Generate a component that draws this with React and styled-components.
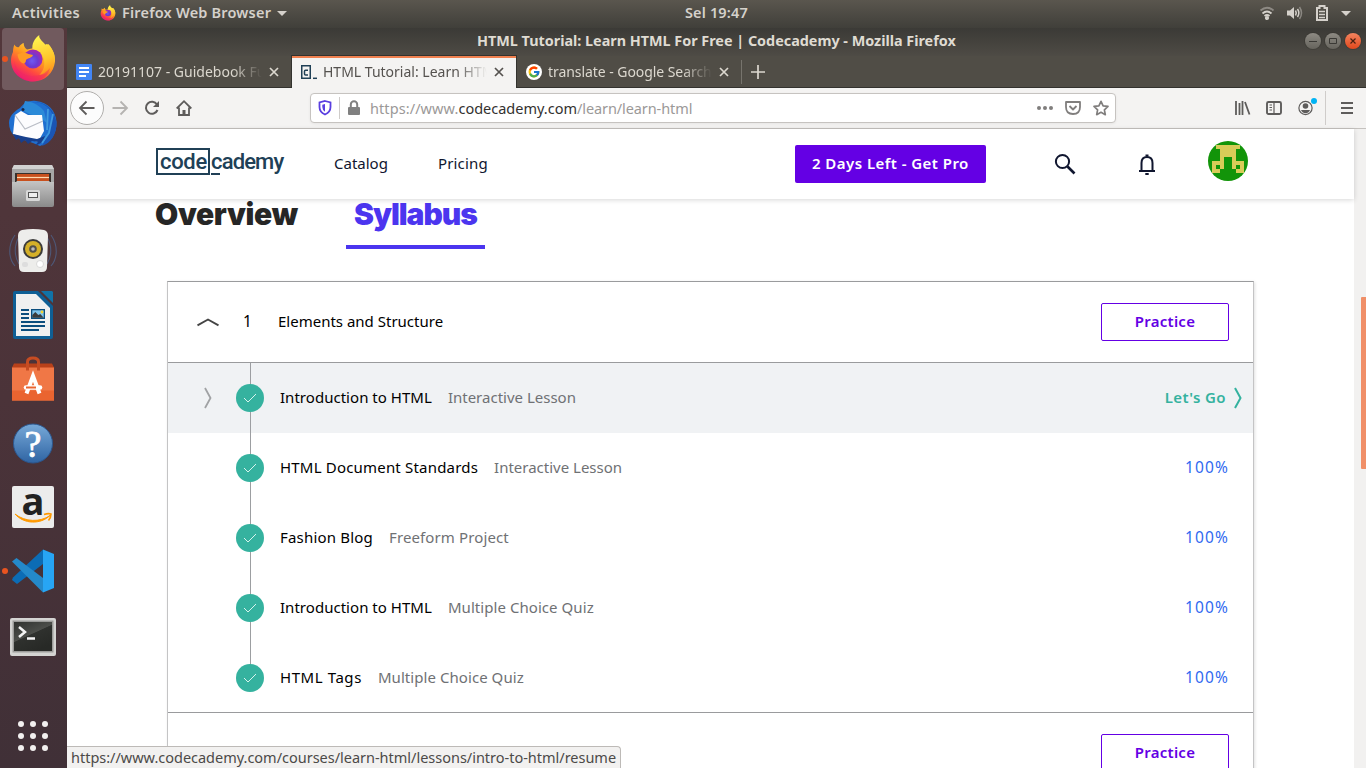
import React from 'react';
import styled, { createGlobalStyle, css } from 'styled-components';
import { FcGoogle } from 'react-icons/fc';

const UI = '"Noto Sans", "Open Sans", sans-serif';
const PAGE = '"Noto Sans", "Open Sans", sans-serif';

const GlobalStyle = createGlobalStyle`
  * { box-sizing: border-box; }
  body { margin: 0; overflow: hidden; background: #fff; }
  svg { display: block; flex: none; overflow: visible; }
`;

const Desktop = styled.div`
  width: 1366px;
  height: 768px;
  display: flex;
  flex-direction: column;
  overflow: hidden;
  font-family: ${UI};
`;

const Label = styled.span`
  display: inline-block;
  padding-bottom: 2px;
  white-space: pre;
  font-size: ${(p) => p.$size || 15}px;
  font-weight: ${(p) => p.$weight || 400};
  letter-spacing: ${(p) => p.$track || 0}px;
  color: ${(p) => p.$color || 'inherit'};
`;

/* ---------- system bar ---------- */
const SystemBar = styled.header`
  height: 28px;
  flex: none;
  display: flex;
  align-items: center;
  padding: 0 15px 2px 12px;
  color: #d5d1cb;
  background: linear-gradient(#5a564e, #403f3a);
`;
const AppMenu = styled.div`
  display: flex;
  align-items: center;
  gap: 6px;
  width: 164px;
  margin-left: 20px;
`;
const Clock = styled.div`margin-left: 421px; padding-bottom: 1px;`;
const Indicators = styled.div`
  margin-left: auto;
  display: flex;
  align-items: center;
  gap: 13px;
`;

/* ---------- dock ---------- */
const Workspace = styled.div`flex: 1; display: flex; min-height: 0;`;
const Dock = styled.nav`
  width: 67px;
  flex: none;
  display: flex;
  flex-direction: column;
  gap: 2px;
  padding: 0 3px 17px 2px;
  background: linear-gradient(#53373b, #4b3339 50%, #403037);
`;
const DockItem = styled.div`
  position: relative;
  width: 62px;
  height: 62px;
  display: flex;
  align-items: center;
  justify-content: center;
  border-radius: 4px;
  background: ${(p) => (p.$focused ? '#715a5e' : 'transparent')};
  ${(p) => p.$running && css`
    &::before {
      content: '';
      position: absolute;
      left: 0;
      top: 28px;
      width: 6px;
      height: 6px;
      border-radius: 50%;
      background: #e95420;
    }
  `}
`;
const AppGrid = styled.div`
  margin: auto 0 0 16px;
  display: grid;
  grid-template-columns: repeat(3, 6px);
  gap: 6px;
`;
const GridDot = styled.i`height: 6px; border-radius: 50%; background: #f2f0ef;`;

/* ---------- browser ---------- */
const Browser = styled.main`flex: 1; min-width: 0; display: flex; flex-direction: column;`;
const TitleBar = styled.div`
  height: 28px;
  flex: none;
  display: flex;
  align-items: center;
  padding: 0 5px 2px 410px;
  color: #dfdbd2;
  background: linear-gradient(#3b3a36, #4e4b45);
`;
const WindowButtons = styled.div`margin-left: auto; display: flex; gap: 4px;`;
const WindowButton = styled.span`
  width: 16px;
  height: 16px;
  display: flex;
  align-items: center;
  justify-content: center;
  border-radius: 50%;
  background: ${(p) => (p.$close ? 'linear-gradient(#f3845f, #e2481c)' : 'linear-gradient(#8d8a83, #66645d)')};
  box-shadow: 0 0 0 1px rgba(50, 48, 43, 0.35);
`;
const TabStrip = styled.div`
  height: 32px;
  flex: none;
  display: flex;
  background: linear-gradient(transparent 31px, #33322e 31px), #504d46;
`;
const Tab = styled.div`
  width: 225px;
  padding: 0 13px 0 9px;
  display: flex;
  align-items: center;
  justify-content: space-between;
  color: #dcd8cf;
  ${(p) => p.$active && css`
    width: 226px;
    margin: 0 0 0 -1px;
    color: #55524f;
    background: #f4f3f2;
    border: solid #33322e;
    border-width: 0 1px;
    padding: 0 12px 0 9px;
    box-shadow: inset 0 2px #f0804f, 0 -1px #33322e;
  `}
`;
const TabTitle = styled.div`
  width: 164px;
  margin-right: 7px;
  margin-left: 6px;
  padding-bottom: 1px;
  overflow: hidden;
  mask-image: linear-gradient(90deg, #000 134px, transparent 164px);
`;
const NewTab = styled.div`
  margin: 4px 0 4px -1px;
  padding-left: 9px;
  display: flex;
  align-items: center;
  border-left: 1px solid #77746d;
`;
const Toolbar = styled.div`
  height: 41px;
  flex: none;
  display: flex;
  align-items: center;
  padding: 0 12px 0 3px;
  border-bottom: 1px solid #c5c2bf;
  background: #f4f3f2;
  color: #5e5c5b;
`;
const BackButton = styled.div`
  width: 34px;
  height: 34px;
  display: flex;
  align-items: center;
  justify-content: center;
  border: 1px solid #b0aeac;
  border-radius: 50%;
  background: #fcfcfc;
`;
const NavIcons = styled.div`display: flex; gap: 16px; margin-left: 8px;`;
const AddressBar = styled.div`
  width: 806px;
  height: 30px;
  margin-left: 118px;
  display: flex;
  align-items: center;
  padding: 0 6px;
  border: 1px solid #c6c3c0;
  border-radius: 4px;
  background: #fff;
  box-shadow: 0 1px 3px rgba(0, 0, 0, 0.06);
`;
const Divider = styled.i`
  width: 1px;
  height: ${(p) => p.$h}px;
  margin: ${(p) => p.$m};
  background: #cfccca;
`;
const Url = styled.div`flex: 1; padding-top: 1px; margin-left: 8px; color: #9b9998;`;
const PageActions = styled.div`display: flex; gap: 12px; color: #807e7d;`;
const ToolIcons = styled.div`margin-left: 118px; display: flex; gap: 16px;`;
const AccountIcon = styled.div`
  position: relative;
  &::after {
    content: '';
    position: absolute;
    top: -2px;
    right: -3px;
    width: 6px;
    height: 6px;
    border-radius: 50%;
    background: #00b3f4;
  }
`;

/* ---------- page ---------- */
const Viewport = styled.div`flex: 1; display: flex; min-height: 0; position: relative;`;
const Page = styled.div`flex: 1; min-width: 0; background: #fff; font-family: ${PAGE};`;
const Scrollbar = styled.div`width: 12px; background: #f2f1f0; padding: 168px 0 0 7px;`;
const Thumb = styled.div`height: 172px; background: #f08f68; border-radius: 1px 0 0 1px;`;
const SiteHeader = styled.div`
  position: relative;
  height: 70px;
  display: flex;
  align-items: center;
  padding: 0 106px 0 89px;
  background: #fff;
  color: #10162f;
  box-shadow: 0 1px 5px rgba(0, 0, 0, 0.16);
`;
const Logo = styled.div`
  display: flex;
  width: 128px;
  height: 28px;
  margin-top: -4px;
  font: 500 22px/23px Roboto, "Open Sans", sans-serif;
  color: #204056;
`;
const LogoBox = styled.span`
  flex: none;
  width: 54px;
  height: 27px;
  padding-left: 2px;
  border: 2px solid #204056;
  letter-spacing: -0.3px;
`;
const LogoRest = styled.span`
  flex: none;
  margin-left: 1px;
  height: 27px;
  padding-top: 2px;
  letter-spacing: -0.85px;
  background: linear-gradient(#204056, #204056) 0 100% / 9px 2px no-repeat;
`;
const SiteNav = styled.div`display: flex; gap: 50px; margin-left: 50px;`;
const ProButton = styled.div`
  width: 191px;
  height: 38px;
  margin-left: 307px;
  display: flex;
  align-items: center;
  justify-content: center;
  border-radius: 2px;
  background: #6400e4;
  color: #fff;
`;
const HeaderIcons = styled.div`
  flex: 1;
  display: flex;
  align-items: center;
  margin-left: 67px;
`;
const BellSlot = styled.div`margin: 0 49px 0 58px;`;
const Tabs = styled.div`
  display: flex;
  height: 50px;
  padding-left: 88px;
  font: 900 30px/30px Inter, "Open Sans", sans-serif;
`;
const PageTab = styled.div`
  width: ${(p) => p.$w}px;
  margin-right: 48px;
  white-space: nowrap;
  letter-spacing: ${(p) => p.$track}px;
  ${(p) => p.$active
    ? css`color: #4b35ef; border-bottom: 4px solid #4b35ef; padding-left: 8px;`
    : css`color: #262626;`}
`;
const Card = styled.section`
  width: 1087px;
  height: 520px;
  margin: 32px 0 0 100px;
  border: 1px solid #9a9b9d;
  border-left-color: #c4c4c5;
  border-right-color: #c4c4c5;
  box-shadow: 1px 1px 3px rgba(0, 0, 0, 0.12);
`;
const ModuleHead = styled.div`
  height: 81px;
  display: flex;
  align-items: center;
  padding: 0 24px 1px 29px;
  border-bottom: ${(p) => (p.$last ? 0 : 1)}px solid #9a9b9d;
  color: #000;
`;
const ModuleNumber = styled.span`width: 35px; margin-left: 24px; padding-bottom: 1px; font-size: 15.5px;`;
const PracticeButton = styled.div`
  width: 128px;
  height: 38px;
  margin-left: auto;
  display: flex;
  align-items: center;
  justify-content: center;
  border: 1px solid #6400e4;
  border-radius: 2px;
  color: #6400e4;
`;
const Lessons = styled.div`height: 350px; border-bottom: 1px solid #9a9b9d;`;
const Lesson = styled.div`
  height: 70px;
  display: flex;
  align-items: center;
  padding-right: ${(p) => (p.$current ? 10 : 24)}px;
  background: ${(p) => (p.$current ? '#f0f2f4' : 'transparent')};
`;
const Expander = styled.div`width: 68px; padding-left: 36px;`;
const Rail = styled.div`
  width: 28px;
  height: 100%;
  display: flex;
  align-items: center;
  background: linear-gradient(#9c9ea1, #9c9ea1) 14px 0 / 1px ${(p) => (p.$end ? 35 : 70)}px no-repeat;
`;
const Check = styled.span`
  width: 28px;
  height: 28px;
  display: flex;
  align-items: center;
  justify-content: center;
  border-radius: 50%;
  background: #35b29f;
`;
const LessonText = styled.div`display: flex; gap: 16px; margin-left: 16px; flex: 1;`;
const Status = styled.div`display: flex; align-items: center; gap: 8px;`;
const StatusBar = styled.div`
  position: absolute;
  left: 0;
  bottom: 0;
  width: 554px;
  height: 22px;
  padding: 0 0 0 4px;
  line-height: 20px;
  border: solid #bdbab7;
  border-width: 1px 1px 0 0;
  border-radius: 0 4px 0 0;
  background: #f2f1f0;
  color: #4c4a48;
`;

/* ---------- icons ---------- */
const Firefox = ({ size = 48, id }) => (
  <svg width={size} height={size} viewBox="0 0 48 48">
    <defs>
      <linearGradient id={id + 'b'} x1=".8" y1=".1" x2=".25" y2=".95">
        <stop offset="0" stopColor="#ffe63c" /><stop offset=".4" stopColor="#ff9a1f" />
        <stop offset=".7" stopColor="#ff4a40" /><stop offset="1" stopColor="#e8127c" />
      </linearGradient>
      <linearGradient id={id + 'y'} x1=".5" y1="0" x2=".7" y2="1">
        <stop offset="0" stopColor="#fff44f" /><stop offset=".6" stopColor="#ffc52b" /><stop offset="1" stopColor="#ff8a1c" />
      </linearGradient>
      <radialGradient id={id + 'p'} cx=".45" cy=".6">
        <stop offset="0" stopColor="#7059f0" /><stop offset=".6" stopColor="#6b3bd2" /><stop offset="1" stopColor="#9b2bb5" />
      </radialGradient>
    </defs>
    <path d="M5.500 9.500C6.500 12 8.500 12.500 10 12c1-2 3-3.500 4.700-4 0 3 1 5 3.300 6.500L30 12l8-3c5 4 8.500 10 8 17-1 12-10 20.500-22 20.500S2 37.500 2 25.500c0-3 .8-6 2-8.500 0-3 .5-5.500 1.500-7.500Z" fill={`url(#${id}b)`} />
    <path d="M30.300 0c-1 4 5 7.500 7 11l2-2c4.500 4.500 7.500 12 6 19-2 7-8 12-15 12 4-4 6-9 4.500-16-1-5-5.500-8-11-8.500C22 9 26 3 30.300 0Z" fill={`url(#${id}y)`} />
    <circle cx="24" cy="24" r="9.600" fill={`url(#${id}p)`} />
    <path d="M8.500 19.500c4-2.500 8-2 11-.5l4.500 1c-1 3-5 3-7 5 0 3-2 4-4 3-3-2-4-5-4.500-8.500Z" fill="#ff9a24" />
    <path d="M5 26c2 9 8 15 18 15 8 0 14-3 18-8-2 8-9 13.500-17 13.500C14 46.500 6 39 5 26Z" fill="#f2295f" opacity=".5" />
  </svg>
);
const Thunderbird = () => (
  <svg width="48" height="48" viewBox="0 -1 48 48">
    <path d="M11 8C15 3 20 0 27 1c12 1 20 10 20.500 21C48 34 41 43 31 46l-7-3L6 37C2 33 0 28 0 23 0 17 4 12 11 8Z" fill="#1f6fd0" />
    <path d="M24 2c10 0 18 6 20 14l-4 16-7 14c9-3 15-12 14.500-24C46 11 37 1 24 2Z" fill="#1a55b4" />
    <path d="M16 1c9 1 15 5 19 10l3 12-8-6-10-3-7-4Z" fill="#2b8ad8" />
    <path d="M6 15 12 11l7 4 14 0 2 16-6 11L4 34Z" fill="#fcfcfe" />
    <path d="m6 15 10 14 18-8" fill="none" stroke="#b9bdc6" strokeWidth="1.200" />
    <path d="m4 34 3 6 3-2 2 5 4-3 3 4 4-3 6 1-3 4 8-4 2-6-8 3-11-2Z" fill="#173f8d" />
    <path d="M44 14 40 33 33 43M39 9l-1 21" stroke="#3f99de" strokeWidth="1.800" fill="none" />
    <circle cx="14" cy="9.500" r="1.500" fill="#182848" />
  </svg>
);
const Files = () => (
  <svg width="48" height="48" viewBox="0 -1 48 48">
    <defs><linearGradient id="fl" x2="0" y2="1"><stop stopColor="#c5c5c5" /><stop offset="1" stopColor="#8a8a8a" /></linearGradient></defs>
    <path d="M5 1h38l2 4v17H3V5Z" fill="#a6a6a6" /><path d="M5 1h38l2 4H3Z" fill="#d2d2d2" />
    <rect x="6" y="9" width="36" height="12" fill="#38302c" />
    <path d="M8 10h32v10H8Z" fill="#c8501e" /><path d="M8 13.500h32" stroke="#ffd9b0" strokeWidth="1.200" />
    <path d="M3 18h4l1-1h32l1 1h4v23a2 2 0 0 1-2 2H5a2 2 0 0 1-2-2Z" fill="url(#fl)" />
    <rect x="17" y="26" width="14" height="11" rx="1.500" fill="#d8d8d8" /><rect x="19.500" y="28.500" width="9" height="5" fill="#eee" stroke="#555" />
  </svg>
);
const Speaker = () => (
  <svg width="48" height="48" viewBox="0 0 48 48">
    <g fill="none" stroke="#4e5878" strokeWidth="1.100"><path d="M6 8C-1 18-1 31 6 39M10 10c-5 8-5 19 0 27M42 8c7 10 7 23 0 31M38 10c5 8 5 19 0 27" /></g>
    <path d="M13 3q11-2 22 0 4 1 4 6l-1 31q0 5-5 5H15q-5 0-5-5L9 9q0-5 4-6Z" fill="#ededeb" />
    <circle cx="24" cy="22" r="10" fill="#3b3b3b" /><circle cx="24" cy="22" r="8" fill="#d4b029" />
    <circle cx="24" cy="22" r="3.800" fill="#52504a" /><circle cx="24" cy="22" r="1.800" fill="#bbb" />
    <rect x="13" y="35" width="6" height="5" rx="2" fill="#ddd" /><circle cx="31" cy="37" r="3.500" fill="#fff" stroke="#ccc" strokeWidth=".7" />
  </svg>
);
const Writer = () => (
  <svg width="48" height="48" viewBox="0 0 48 48">
    <path d="M6 0h23l15 15v31a2 2 0 0 1-2 2H6a2 2 0 0 1-2-2V2a2 2 0 0 1 2-2Z" fill="#0f5f95" />
    <path d="M32 0h11l1 1v11Z" fill="#1173a8" />
    <path d="M7 3h20l14 14v28H7Z" fill="#f0f0f0" />
    <path d="M12 19h8M12 23h8M12 27h8M12 31h24M12 35h24M12 39h18" stroke="#0b4d7d" strokeWidth="2" />
    <rect x="22" y="18" width="14" height="10" fill="#0b4d7d" /><rect x="23.300" y="19.300" width="11.400" height="7.400" fill="#7fc4ec" />
    <path d="M23.300 26.700V24l3-3 3 3 2-1 3.400 3.700Z" fill="#3c3c3c" /><circle cx="33" cy="21" r="1.400" fill="#f5d32c" />
  </svg>
);
const Software = () => (
  <svg width="48" height="48" viewBox="0 -2.500 48 48">
    <path d="M5 6h38l2 4v5H3v-5Z" fill="#b8411a" />
    <rect x="3" y="10" width="42" height="33" fill="#f07746" /><path d="M3 33h42v10H3Z" fill="#ea6430" />
    <path d="M18.500 13V4.500q0-4 5.500-4t5.500 4V13" fill="none" stroke="#c64c22" strokeWidth="3" />
    <g fill="none" stroke="#fff"><path d="m17.500 36 6.500-17.500L30.500 36" strokeWidth="4" /><path d="M17 30h14" strokeWidth="4.600" strokeLinecap="round" /></g>
    <path d="M17 30h10" stroke="#ea6430" strokeWidth="2" />
  </svg>
);
const Help = () => (
  <svg width="48" height="48" viewBox="0 0 48 48">
    <defs><linearGradient id="hp" x2="0" y2="1"><stop stopColor="#77a9d8" /><stop offset="1" stopColor="#2f64a3" /></linearGradient></defs>
    <circle cx="24" cy="24.500" r="19.500" fill="url(#hp)" stroke="#2b578f" />
    <text x="24" y="37.500" textAnchor="middle" fill="#fff" stroke="#fff" strokeWidth=".8" fontFamily="Liberation Serif, serif" fontSize="38">?</text>
  </svg>
);
const Amazon = () => (
  <svg width="48" height="48" viewBox="0 0 48 48">
    <rect x="3" y="3" width="42" height="42" rx="2" fill="#ececec" />
    <text x="24" y="31.500" textAnchor="middle" fill="#222" fontFamily="Open Sans, sans-serif" fontSize="38" fontWeight="700">a</text>
    <path d="M6 31c10 8 25 8.500 35 1.500-9 9-26 9-35-1.500Z" fill="#f90" stroke="#f90" />
    <path d="M35 31.500c3-1 5.500-1 7-.5 0 2-.7 4.500-2.500 6.500" fill="none" stroke="#f90" strokeWidth="1.600" />
  </svg>
);
const VSCode = () => (
  <svg width="48" height="48" viewBox="0 0 48 48">
    <path d="m3 33 5 4L34 17V2.500L4 30.500Z" fill="#0c6cb5" />
    <path d="m3 14.500 4.500-3.500L34 31v14.500Z" fill="#2489ca" />
    <path d="m34 2.500 11 4.500v34l-11 4.500Z" fill="#27a5f4" />
  </svg>
);
const Terminal = () => (
  <svg width="48" height="48" viewBox="0 -2 48 48">
    <defs><linearGradient id="tm" x2=".6" y2="1"><stop stopColor="#30322f" /><stop offset=".5" stopColor="#4c4e4a" /><stop offset=".52" stopColor="#2f312e" /><stop offset="1" stopColor="#272926" /></linearGradient></defs>
    <rect x="1" y="5" width="46" height="38" rx="2" fill="#d4d4d2" /><rect x="3.500" y="7.500" width="41" height="32" fill="#9b9b99" />
    <rect x="5" y="9" width="38" height="29" fill="url(#tm)" />
    <path d="m10 14 6 5-6 5M18 25.500h8" fill="none" stroke="#f3f3f3" strokeWidth="2.500" />
  </svg>
);
const Caret = ({ w = 10 }) => <svg width={w} height="5" viewBox="0 0 10 5"><path d="M0 0h10L5 5Z" fill="#d5d1cb" /></svg>;
const Line = ({ w = 16, h = w, d, sw = 2, box, ...rest }) => (
  <svg width={w} height={h} viewBox={box || `0 0 ${w} ${h}`} fill="none" stroke="currentColor" strokeWidth={sw} {...rest}><path d={d} /></svg>
);
const CloseX = () => <Line w={10} d="m1 1 8 8M9 1 1 9" sw={1.7} />;
const CodecademyMark = () => (
  <svg width="16" height="16" viewBox="0 0 16 16" fill="none" stroke="#204056">
    <rect x=".75" y="1.750" width="8.500" height="12.500" strokeWidth="1.500" /><path d="M7 6.200H4.500a1 1 0 0 0-1 1V10a1 1 0 0 0 1 1H7" strokeWidth="1.500" /><path d="M12 14.300h4" strokeWidth="1.500" />
  </svg>
);
const DocsMark = () => (
  <svg width="16" height="16" viewBox="0 0 16 16"><rect width="16" height="16" rx="1" fill="#4285f4" /><path d="M3 4h10M3 8h10M3 12h7" stroke="#fff" strokeWidth="2" /></svg>
);
const GoogleMark = () => (
  <svg width="16" height="16" viewBox="0 0 16 16"><circle cx="8" cy="8" r="8" fill="#fff" /><g transform="translate(1.500 1.500)"><FcGoogle size={13} /></g></svg>
);
/* inclusive column runs of the filled cells, one string per row */
const AVATAR = ['2-7', '3-6', '3-6', '3-3,6-6', '1-3,6-8', '1-1,3-3,6-6,8-8', '1-2,7-8'];
const Avatar = () => (
  <svg width="40" height="40" viewBox="0 0 40 40">
    <circle cx="20" cy="20" r="20" fill="#129409" />
    {AVATAR.map((row, y) => row.split(',').map((run) => {
      const [a, b] = run.split('-').map(Number);
      return <rect key={y + run} x={a * 4} y={(y + 1) * 4} width={(b - a + 1) * 4} height="4" fill="#d8cc58" shapeRendering="crispEdges" />;
    }))}
  </svg>
);
const AvatarSlot = styled.div`margin-top: -6px;`;
const CheckMark = () => <Line w={14} h={10} d="m1 5 4 4 8-8" sw={1} stroke="#d9f3ee" />;

const LESSONS = [
  { title: 'Introduction to HTML', track: 0.03, kind: 'Interactive Lesson', kindTrack: 0, current: true },
  { title: 'HTML Document Standards', track: 0.19, kind: 'Interactive Lesson', kindTrack: 0 },
  { title: 'Fashion Blog', track: 0.19, kind: 'Freeform Project', kindTrack: 0.12 },
  { title: 'Introduction to HTML', track: 0.03, kind: 'Multiple Choice Quiz', kindTrack: 0.06 },
  { title: 'HTML Tags', track: 0.57, kind: 'Multiple Choice Quiz', kindTrack: 0.06 },
];
const DOCK = [Thunderbird, Files, Speaker, Writer, Software, Help, Amazon];

export default function App() {
  return (
    <Desktop>
      <GlobalStyle />
      <SystemBar>
        <Label $weight={600} $size={14.5} $track={0.33}>Activities</Label>
        <AppMenu>
          <Firefox size={16} id="s" />
          <Label $weight={600} $size={14.5} $track={0.2}>Firefox Web Browser</Label>
          <Caret />
        </AppMenu>
        <Clock><Label $weight={600} $size={14.5} $track={0.15}>Sel 19:47</Label></Clock>
        <Indicators>
          <svg width="14" height="14" viewBox="0 0 14 14" fill="none" stroke="#d5d1cb" strokeWidth="1.800">
            <path d="M.5 4.500q6.500-5.500 13 0" opacity=".45" /><path d="M2.500 7.500q4.500-4 9 0M4.500 10q2.500-2 5 0" /><circle cx="7" cy="12" r="1.200" fill="#d5d1cb" />
          </svg>
          <svg width="16" height="14" viewBox="0 0 16 14" fill="none" stroke="#d5d1cb" strokeWidth="1.500">
            <path d="M0 4.500h3L7 1v12L3 9.500H0Z" fill="#d5d1cb" stroke="none" /><path d="M8.500 4.500q1.500 2.500 0 5M10.500 3q2.700 4 0 8" /><path d="M12.500 1q4 6 0 12" opacity=".45" />
          </svg>
          <svg width="12" height="16" viewBox="0 0 12 16" fill="none" stroke="#d5d1cb">
            <path d="M1 3h2.500V1h5v2H11v12H1Z" strokeWidth="2" /><path d="M3 6.500h6M3 9.500h6M3 12.500h6" strokeWidth="1.500" />
          </svg>
          <Caret w={10} />
        </Indicators>
      </SystemBar>
      <Workspace>
        <Dock>
          <DockItem $focused $running><Firefox id="d" /></DockItem>
          {DOCK.map((Icon, i) => <DockItem key={i}><Icon /></DockItem>)}
          <DockItem $running><VSCode /></DockItem>
          <DockItem><Terminal /></DockItem>
          <AppGrid>{Array.from({ length: 9 }, (_, i) => <GridDot key={i} />)}</AppGrid>
        </Dock>
        <Browser>
          <TitleBar>
            <Label $weight={700} $size={14.4} $track={-0.015}>HTML Tutorial: Learn HTML For Free | Codecademy - Mozilla Firefox</Label>
            <WindowButtons>
              <WindowButton><Line w={8} d="M0 4.500h8" sw={1} stroke="#3a3935" /></WindowButton>
              <WindowButton><Line w={8} d="M.5 1.500h7v5h-7Z" sw={1} stroke="#3a3935" /></WindowButton>
              <WindowButton $close><Line w={6} d="m.5.5 5 5m0-5-5 5" sw={1.2} stroke="#4a2010" /></WindowButton>
            </WindowButtons>
          </TitleBar>
          <TabStrip>
            <Tab><DocsMark /><TabTitle><Label $size={14}>20191107 - Guidebook Fu</Label></TabTitle><CloseX /></Tab>
            <Tab $active><CodecademyMark /><TabTitle><Label $size={14}>HTML Tutorial: Learn HTML</Label></TabTitle><CloseX /></Tab>
            <Tab><GoogleMark /><TabTitle><Label $size={14} $track={-0.06}>translate - Google Search</Label></TabTitle><CloseX /></Tab>
            <NewTab><Line w={14} d="M7 0v14M0 7h14" sw={1.7} stroke="#dcd8cf" /></NewTab>
          </TabStrip>
          <Toolbar>
            <BackButton><Line d="M15.500 8H1.500M7.500 1.500 1 8l6.500 6.500" sw={1.8} /></BackButton>
            <NavIcons>
              <Line d="M.5 8h14M8.500 1.500 15 8l-6.500 6.500" sw={1.8} stroke="#b5b3b1" />
              <svg width="16" height="16" viewBox="0 0 16 16" fill="none" stroke="currentColor" strokeWidth="2"><path d="M13 4.500A6 6 0 1 0 13.500 10" /><path d="M15 1v6H9Z" fill="currentColor" stroke="none" /></svg>
              <svg width="16" height="16" viewBox="0 0 16 16" fill="none" stroke="currentColor" strokeWidth="1.800"><path d="M.7 8.500 8 1.200l7.300 7.300M3 7.500V15h10V7.500" /><path d="M6.500 15v-5h3v5Z" fill="currentColor" stroke="none" /></svg>
            </NavIcons>
            <AddressBar>
              <svg width="16" height="16" viewBox="0 0 16 16"><path d="M8 1 13.500 2.500V7q0 5-5.500 7.500Q2.500 12 2.500 7V2.500Z" fill="#fff" stroke="#5a3fe0" strokeWidth="1.800" /><path d="M8 4 5.300 4.800V7q0 3 2.700 4.800Z" fill="#5a3fe0" /></svg>
              <Divider $h={22} $m="0 6px 0 6px" />
              <svg width="16" height="16" viewBox="0 0 16 16"><rect x="2" y="7" width="12" height="8" rx="1" fill="#808080" /><path d="M4.800 8V4.500a3.200 3.200 0 0 1 6.400 0V8" fill="none" stroke="#808080" strokeWidth="2" /></svg>
              <Url><Label $size={14.5} $track={0.08}>https://www.</Label><Label $size={14.5} $color="#33312f">codecademy.com</Label><Label $size={14.5} $track={-0.1}>/learn/learn-html</Label></Url>
              <PageActions>
                <svg width="16" height="16" viewBox="0 0 16 16" fill="currentColor"><circle cx="2" cy="8" r="2" /><circle cx="8" cy="8" r="2" /><circle cx="14" cy="8" r="2" /></svg>
                <Line d="M1 2h14v5q0 7-7 7T1 7ZM4.500 6 8 9.500 11.500 6" sw={1.8} strokeLinejoin="round" />
                <Line d="m8 1.300 2.100 4.500 4.900.6-3.600 3.400.9 4.900L8 12.300l-4.300 2.400.9-4.900L1 6.400l4.900-.6Z" sw={1.7} strokeLinejoin="round" />
              </PageActions>
            </AddressBar>
            <ToolIcons>
              <Line d="M2 1v14M5.500 3v12M8.500 1v14M11 2l4.500 12.500" sw={1.8} />
              <svg width="16" height="16" viewBox="0 0 16 16" fill="none" stroke="currentColor"><rect x="1" y="2" width="14" height="12" rx="1.500" strokeWidth="1.900" /><path d="M8 2v12" strokeWidth="1.200" /><path d="M3.500 5h2.500M3.500 7.500h2.500M3.500 10h2.500" /></svg>
              <AccountIcon><svg width="16" height="16" viewBox="0 0 16 16" fill="none" stroke="currentColor"><circle cx="7.500" cy="8" r="6.600" strokeWidth="1.200" /><circle cx="7.500" cy="6" r="2.800" fill="currentColor" stroke="none" /><path d="M3 10h9q-1.500 3.300-4.500 3.300T3 10Z" fill="currentColor" stroke="none" /></svg></AccountIcon>
            </ToolIcons>
            <Divider $h={34} $m="0 15px 0 11px" />
            <Line w={12} d="M0 1h12M0 6h12M0 11h12" />
          </Toolbar>
          <Viewport>
            <Page>
              <SiteHeader>
                <Logo><LogoBox>code</LogoBox><LogoRest>cademy</LogoRest></Logo>
                <SiteNav><Label>Catalog</Label><Label $track={0.18}>Pricing</Label></SiteNav>
                <ProButton><Label $weight={600} $track={0.45}>2 Days Left - Get Pro</Label></ProButton>
                <HeaderIcons>
                  <svg width="24" height="24" viewBox="0 0 24 24" fill="none" stroke="currentColor"><circle cx="9.500" cy="9.500" r="6.600" strokeWidth="2" /><path d="m14.500 14.500 7 7" strokeWidth="2.600" /></svg>
                  <BellSlot><svg width="24" height="24" viewBox="0 0 24 24" fill="none" stroke="currentColor" strokeWidth="2"><path d="M6.500 18.500V11q0-6 5.500-6t5.500 6v7.500M4 19h16" /><path d="M10.500 3.500h3M10.300 22h3.400" /></svg></BellSlot>
                  <AvatarSlot><Avatar /></AvatarSlot>
                </HeaderIcons>
              </SiteHeader>
              <Tabs>
                <PageTab $w={143} $track={-0.35}>Overview</PageTab>
                <PageTab $w={139} $track={-1.05} $active>Syllabus</PageTab>
              </Tabs>
              <Card>
                <ModuleHead>
                  <Line w={22} h={8} d="m.5 7.300 10.500-5.800 10.500 5.800" sw={1.9} stroke="#444" />
                  <ModuleNumber>1</ModuleNumber>
                  <Label>Elements and Structure</Label>
                  <PracticeButton><Label $weight={600} $track={0.25}>Practice</Label></PracticeButton>
                </ModuleHead>
                <Lessons>
                  {LESSONS.map((l, i) => (
                    <Lesson key={i} $current={l.current}>
                      <Expander>{l.current && <Line w={8} h={22} d="m1 1 5.500 10L1 21" sw={1.8} stroke="#a0a2a4" />}</Expander>
                      <Rail $end={i === LESSONS.length - 1}><Check><CheckMark /></Check></Rail>
                      <LessonText>
                        <Label $track={l.track} $color="#000">{l.title}</Label>
                        <Label $track={l.kindTrack} $color="#6f7174">{l.kind}</Label>
                      </LessonText>
                      {l.current
                        ? <Status><Label $weight={600} $track={0.4} $color="#35b29f">Let's Go</Label><Line w={9} h={22} d="m1 1 5.500 10L1 21" sw={2} stroke="#35b29f" /></Status>
                        : <Label $size={15.5} $track={1.1} $color="#3069f0">100%</Label>}
                    </Lesson>
                  ))}
                </Lessons>
                <ModuleHead $last><PracticeButton><Label $weight={600} $track={0.25}>Practice</Label></PracticeButton></ModuleHead>
              </Card>
            </Page>
            <Scrollbar><Thumb /></Scrollbar>
            <StatusBar><Label $size={14.5} $track={-0.015}>https://www.codecademy.com/courses/learn-html/lessons/intro-to-html/resume</Label></StatusBar>
          </Viewport>
        </Browser>
      </Workspace>
    </Desktop>
  );
}
